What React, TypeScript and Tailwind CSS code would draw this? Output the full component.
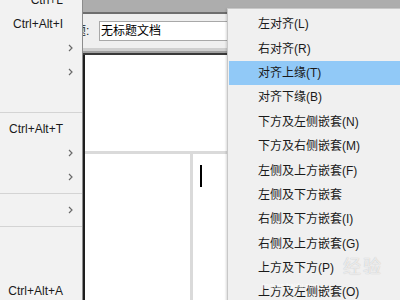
import React from 'react';

type LeftItem = { kind: 'row'; key?: string; sub?: boolean } | { kind: 'sep' };

const leftItems: LeftItem[] = [
  { kind: 'row', key: 'Ctrl+L' },
  { kind: 'row', key: 'Ctrl+Alt+I' },
  { kind: 'row', sub: true },
  { kind: 'row', sub: true },
  { kind: 'row' },
  { kind: 'sep' },
  { kind: 'row', key: 'Ctrl+Alt+T' },
  { kind: 'row', sub: true },
  { kind: 'row', sub: true },
  { kind: 'sep' },
  { kind: 'row', sub: true },
  { kind: 'sep' },
  { kind: 'row' },
  { kind: 'row' },
  { kind: 'row', key: 'Ctrl+Alt+A' },
];

const menuItems = [
  '左对齐(L)',
  '右对齐(R)',
  '对齐上缘(T)',
  '对齐下缘(B)',
  '下方及左侧嵌套(N)',
  '下方及右侧嵌套(M)',
  '左侧及上方嵌套(F)',
  '左侧及下方嵌套',
  '右侧及下方嵌套(I)',
  '右侧及上方嵌套(G)',
  '上方及下方(P)',
  '上方及左侧嵌套(O)',
];

const Chevron = () => (
  <svg width="5" height="8" viewBox="0 0 5 8" className="block">
    <path d="M1 1 L4 4 L1 7" fill="none" stroke="#6a6a6a" strokeWidth="1.2" />
  </svg>
);

const LeftMenu = () => (
  <div className="w-[83px] shrink-0 bg-[#f2f2f2] border-r border-[#8c8c8c] overflow-hidden">
    <div className="-mt-[12px]">
      {leftItems.map((item, i) =>
        item.kind === 'sep' ? (
          <div key={i} className="h-[9px] flex items-center">
            <div className="h-px w-full bg-[#d4d4d4]" />
          </div>
        ) : (
          <div key={i} className="h-[24px] flex items-center justify-end pr-[9px] text-[12px] text-[#1a1a1a]">
            {item.key && <span className="mr-[10px]">{item.key}</span>}
            {item.sub && <Chevron />}
          </div>
        )
      )}
    </div>
  </div>
);

const ContextMenu = () => (
  <div className="absolute left-[227px] top-[8px] right-0 h-[310px] bg-[#f0f0f0] border-l border-t border-[#c8c8c8] pl-px pt-[3px] shadow-[-1px_1px_2px_rgba(0,0,0,0.15)]">
    {menuItems.map((label, i) => (
      <div
        key={label}
        className={
          'h-[24.4px] flex items-center pl-[29px] text-[12px] text-[#1a1a1a] ' +
          (i === 2 ? 'bg-[#91c9f7]' : '')
        }
      >
        {label}
      </div>
    ))}
  </div>
);

export default function App() {
  return (
    <div
      className="w-[400px] h-[300px] relative overflow-hidden flex bg-[#f0f0f0]"
      style={{ fontFamily: '"Liberation Sans", "Noto Sans CJK SC", sans-serif' }}
    >
      <LeftMenu />
      <div className="flex-1 flex flex-col min-w-0">
        <div className="h-[12px] bg-[#adadad]" />
        <div className="h-[2px] bg-[#6e6e6e]" />
        <div className="h-[34px] bg-[#efefef] flex items-center overflow-hidden">
          <span className="text-[12px] text-[#222] -ml-[9px] w-[25px] shrink-0">题:</span>
          <div className="w-[140px] h-[20px] bg-white border border-[#a8a8a8] flex items-center pl-[1px] text-[12px] text-black shrink-0">
            无标题文档
          </div>
        </div>
        <div className="h-[3px] bg-[#cfcfcf]" />
        <div className="h-[2px] bg-[#a0a0a0]" />
        <div className="h-[2px] bg-[#3a3a3a]" />
        <div className="flex-1 bg-white border-l-2 border-[#1e1e1e] flex flex-col">
          <div className="h-[99px] border-b-[3px] border-[#dadada]" />
          <div className="flex-1 flex">
            <div className="w-[108px] border-r-[3px] border-[#dadada]" />
            <div className="flex-1 pl-[7px] pt-[11px]">
              <div className="w-[2px] h-[22px] bg-black" />
            </div>
          </div>
        </div>
      </div>
      <ContextMenu />
      <div className="absolute left-[343px] top-[254px] text-[18px] text-white/70 tracking-[2px] [text-shadow:0_0_1px_rgba(0,0,0,0.25)]">
        经验
      </div>
      <div className="absolute left-[262px] top-[281px] text-[7px] text-white/70">jingyan.baidu.com</div>
    </div>
  );
}
